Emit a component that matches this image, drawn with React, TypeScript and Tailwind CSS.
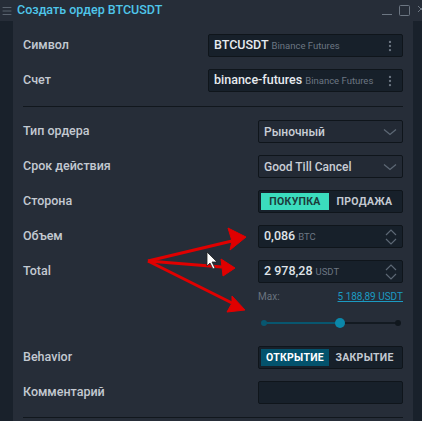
import { EllipsisVertical, Menu } from "lucide-react";

const font = { fontFamily: 'Roboto, "Noto Sans", sans-serif' };

const Label = ({ children }: { children: React.ReactNode }) => (
  <div className="text-[12.5px] font-medium text-[#c3c9d1]">{children}</div>
);

const Row = ({
  label,
  children,
}: {
  label?: string;
  children: React.ReactNode;
}) => (
  <div className="flex h-[23px] items-center justify-between">
    <Label>{label}</Label>
    {children}
  </div>
);

const SymbolBox = ({ main, sub }: { main: string; sub: string }) => (
  <div className="flex h-[23px] w-[195px] items-center justify-between rounded-[2px] border border-[#0f151b] bg-[#17202a] pl-[5px] pr-[5px]">
    <div className="flex items-baseline gap-[3px] whitespace-nowrap">
      <span className="text-[12.5px] font-medium text-[#e6eaef]">{main}</span>
      <span className="text-[9.5px] text-[#6c7682]">{sub}</span>
    </div>
    <EllipsisVertical size={14} className="text-[#6c7682]" />
  </div>
);

const Select = ({ value }: { value: string }) => (
  <div className="flex h-[23px] w-[145px] items-center justify-between rounded-[2px] border border-[#0f151b] bg-[#232a35] pl-[5px] pr-[4px]">
    <span className="text-[12px] font-medium text-[#c9ced6]">{value}</span>
    <svg width="14" height="8" viewBox="0 0 14 8" className="mr-[1px]">
      <path d="M1 1.5 L7 6.5 L13 1.5" fill="none" stroke="#5d6875" strokeWidth="1.3" />
    </svg>
  </div>
);

const NumberInput = ({ value, unit }: { value: string; unit: string }) => (
  <div className="flex h-[23px] w-[145px] items-center justify-between rounded-[2px] border border-[#0f151b] bg-[#17202a] pl-[5px] pr-[5px]">
    <div className="flex items-baseline gap-[3px]">
      <span className="text-[12.5px] font-medium text-[#dfe3e8]">{value}</span>
      <span className="text-[9.5px] text-[#6c7682]">{unit}</span>
    </div>
    <svg width="12" height="18" viewBox="0 0 12 18">
      <path d="M1 7 L6 2 L11 7" fill="none" stroke="#5d6875" strokeWidth="1.2" />
      <path d="M1 11 L6 16 L11 11" fill="none" stroke="#5d6875" strokeWidth="1.2" />
    </svg>
  </div>
);

const Toggle = ({
  left,
  right,
  activeClass,
}: {
  left: string;
  right: string;
  activeClass: string;
}) => (
  <div className="flex h-[23px] w-[145px] items-center rounded-[2px] border border-[#0f151b] bg-[#17202a] p-[2px]">
    <div
      className={`flex h-[17px] w-[68px] items-center justify-center text-[10.5px] font-bold tracking-[0.3px] ${activeClass}`}
    >
      {left}
    </div>
    <div className="flex flex-1 items-center justify-center text-[10.5px] font-bold tracking-[0.3px] text-[#c3c9d1]">
      {right}
    </div>
  </div>
);

const Annotations = () => (
  <svg
    className="pointer-events-none absolute left-0 top-0"
    width="422"
    height="421"
    viewBox="0 0 422 421"
  >
    <g fill="#e00000" stroke="#e00000" strokeLinejoin="round">
      <line x1="148" y1="261" x2="232" y2="241" strokeWidth="3" />
      <polygon points="246,237 228,228 232,241 230,250" strokeWidth="1" />
      <line x1="148" y1="261" x2="222" y2="267" strokeWidth="3" />
      <polygon points="235,268 221,259 222,267 223,276" strokeWidth="1" />
      <line x1="148" y1="261" x2="232" y2="303" strokeWidth="3" />
      <polygon points="245,310 232,296 232,303 227,312" strokeWidth="1" />
    </g>
    <path
      d="M207 252 L207 266 L210 263 L213 269 L215 268 L212 262 L217 262 Z"
      fill="#ffffff"
      stroke="#222"
      strokeWidth="0.8"
    />
  </svg>
);

export default function App() {
  return (
    <div
      className="relative flex h-[421px] w-[422px] flex-col overflow-hidden bg-[#262d38]"
      style={font}
    >
      <div className="flex h-[21px] shrink-0 items-center justify-between">
        <div className="flex items-center">
          <Menu size={12} strokeWidth={1.5} className="ml-[1px] text-[#6c7682]" />
          <span className="ml-[4px] text-[12.5px] font-medium text-[#4fc6ea]">
            Создать ордер BTCUSDT
          </span>
        </div>
        {/* window controls, close button cut off at the edge */}
        <svg width="40" height="21" viewBox="0 0 40 21" className="shrink-0">
          <line x1="0" y1="14.5" x2="10" y2="14.5" stroke="#6c7682" strokeWidth="1" />
          <rect x="17.5" y="5.5" width="10" height="10" rx="1" fill="none" stroke="#6c7682" strokeWidth="1" />
          <line x1="36" y1="6" x2="42" y2="12" stroke="#6c7682" strokeWidth="1" />
          <line x1="36" y1="12" x2="42" y2="6" stroke="#6c7682" strokeWidth="1" />
        </svg>
      </div>
      <div className="flex flex-1">
        <div className="w-[13px] bg-[#19212b]" />
        <div className="flex flex-1 flex-col px-[10px] pt-[13px]">
          <div className="flex flex-col gap-[12px]">
            <Row label="Символ">
              <SymbolBox main="BTCUSDT" sub="Binance Futures" />
            </Row>
            <Row label="Счет">
              <SymbolBox main="binance-futures" sub="Binance Futures" />
            </Row>
          </div>
          <div className="mt-[14px] h-[1px] bg-[#11171d]" />
          <div className="mt-[13px] flex flex-col gap-[12px]">
            <Row label="Тип ордера">
              <Select value="Рыночный" />
            </Row>
            <Row label="Срок действия">
              <Select value="Good Till Cancel" />
            </Row>
            <Row label="Сторона">
              <Toggle
                left="ПОКУПКА"
                right="ПРОДАЖА"
                activeClass="bg-[#3bdcbd] text-[#1b3b3a]"
              />
            </Row>
            <Row label="Объем">
              <NumberInput value="0,086" unit="BTC" />
            </Row>
            <Row label="Total">
              <NumberInput value="2 978,28" unit="USDT" />
            </Row>
          </div>
          <div className="mt-[6px] flex justify-end">
            <div className="flex w-[145px] items-center justify-between text-[10px]">
              <span className="text-[#69737e]">Max:</span>
              <span className="text-[#1b9ac2] underline">5 188,89 USDT</span>
            </div>
          </div>
          <div className="mt-[14px] flex justify-end">
            <div className="relative flex h-[10px] w-[145px] items-center">
              <div className="absolute left-[5px] right-[5px] h-[2px] bg-[#131a21]" />
              <div className="absolute left-[5px] h-[2px] w-[78px] bg-[#08566f]" />
              <div className="absolute left-[3px] h-[6px] w-[6px] rounded-full bg-[#08566f]" />
              <div className="absolute left-[77px] h-[10px] w-[10px] rounded-full bg-[#0b87a9]" />
              <div className="absolute right-[2px] h-[6px] w-[6px] rounded-full bg-[#10171d]" />
            </div>
          </div>
          <div className="mt-[18px] flex flex-col gap-[12px]">
            <Row label="Behavior">
              <Toggle
                left="ОТКРЫТИЕ"
                right="ЗАКРЫТИЕ"
                activeClass="bg-[#03526c] text-[#ffffff]"
              />
            </Row>
            <Row label="Комментарий">
              <div className="h-[23px] w-[145px] rounded-[2px] border border-[#0f151b] bg-[#17202a]" />
            </Row>
          </div>
          <div className="mt-[13px] h-[1px] bg-[#11171d]" />
        </div>
        <div className="w-[9px] bg-[#19212b]" />
      </div>
      <Annotations />
    </div>
  );
}
